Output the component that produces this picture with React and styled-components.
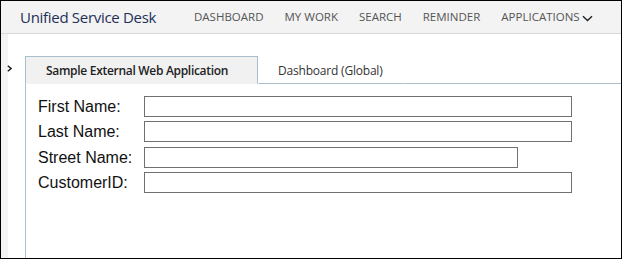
import React from 'react';
import styled, { createGlobalStyle } from 'styled-components';

const GlobalStyle = createGlobalStyle`
  html, body {
    margin: 0;
    padding: 0;
    background: #ffffff;
  }
  * {
    box-sizing: border-box;
  }
`;

const navItems = ['Dashboard', 'My Work', 'Search', 'Reminder'];

const fields = [
  { label: 'First Name:', width: 428 },
  { label: 'Last Name:', width: 428 },
  { label: 'Street Name:', width: 374 },
  { label: 'CustomerID:', width: 428 },
];

function App() {
  return (
    <>
      <GlobalStyle />
      <Frame>
        <Header>
          <Title>Unified Service Desk</Title>
          <Nav>
            {navItems.map((item) => (
              <NavItem key={item}>{item}</NavItem>
            ))}
            <NavItem>
              Applications
              <Chevron width="11" height="7" viewBox="0 0 11 7">
                <path d="M1 1.2 L5.5 5.6 L10 1.2" fill="none" stroke="#222" strokeWidth="1.4" />
              </Chevron>
            </NavItem>
          </Nav>
        </Header>

        <Body>
          <Rail>
            <RailToggle>
              <svg width="5" height="7" viewBox="0 0 5 7">
                <path d="M0.8 0.8 L4 3.5 L0.8 6.2" fill="none" stroke="#222" strokeWidth="1.5" />
              </svg>
            </RailToggle>
          </Rail>

          <Workspace>
            <TabRow>
              <Tab $active>Sample External Web Application</Tab>
              <Tab>Dashboard (Global)</Tab>
              <TabFiller />
            </TabRow>
            <Panel>
              <Form>
                {fields.map((f) => (
                  <React.Fragment key={f.label}>
                    <Label>{f.label}</Label>
                    <Input type="text" $width={f.width} />
                  </React.Fragment>
                ))}
              </Form>
            </Panel>
          </Workspace>
        </Body>
      </Frame>
    </>
  );
}

// Styled Components
const Frame = styled.div`
  width: 622px;
  height: 259px;
  border: 1px solid #000;
  display: flex;
  flex-direction: column;
  overflow: hidden;
  background: #fff;
`;

const Header = styled.header`
  height: 33px;
  flex: none;
  display: flex;
  align-items: center;
  padding-left: 19px;
  background: #f3f3f3;
  border-bottom: 1px solid #d8d8d8;
`;

const Title = styled.div`
  font-family: "Open Sans", "Noto Sans", sans-serif;
  font-size: 15px;
  color: #1f3058;
  letter-spacing: -0.3px;
  width: 174px;
  margin-top: -1px;
  white-space: nowrap;
`;

const Nav = styled.nav`
  display: flex;
  align-items: center;
  gap: 21px;
`;

const NavItem = styled.div`
  font-family: "Open Sans", "Noto Sans", sans-serif;
  font-size: 11.5px;
  color: #555;
  text-transform: uppercase;
  letter-spacing: 0;
  display: flex;
  align-items: center;
  margin-top: -1px;
  white-space: nowrap;
`;

const Chevron = styled.svg`
  margin-left: 2px;
  margin-top: 3px;
`;

const Body = styled.div`
  flex: 1;
  display: flex;
  min-height: 0;
`;

const Rail = styled.aside`
  width: 24px;
  flex: none;
  position: relative;
  background: linear-gradient(to right, #f4f4f4 0, #f4f4f4 7px, #fff 7px);
`;

const RailToggle = styled.div`
  position: absolute;
  left: 6px;
  top: 31px;
  line-height: 0;
`;

const Workspace = styled.main`
  flex: 1;
  display: flex;
  flex-direction: column;
  padding-top: 22px;
  background: #fff;
`;

const TabRow = styled.div`
  display: flex;
  height: 28px;
  flex: none;
`;

const Tab = styled.div`
  display: flex;
  align-items: center;
  flex: none;
  white-space: nowrap;
  padding: 1px 20px 0 ${(p) => (p.$active ? '20px' : '19px')};
  width: ${(p) => (p.$active ? '233px' : 'auto')};
  font-family: "Open Sans", "Noto Sans", sans-serif;
  font-size: 12px;
  font-weight: ${(p) => (p.$active ? 600 : 400)};
  letter-spacing: ${(p) => (p.$active ? '-0.3px' : '-0.2px')};
  color: ${(p) => (p.$active ? '#222' : '#333')};
  background: ${(p) => (p.$active ? '#f1f1f1' : '#fff')};
  border: 1px solid ${(p) => (p.$active ? '#a9c0cc' : 'transparent')};
  border-bottom: 1px solid ${(p) => (p.$active ? 'transparent' : '#a9c0cc')};
`;

const TabFiller = styled.div`
  flex: 1;
  border-bottom: 1px solid #a9c0cc;
`;

const Panel = styled.section`
  flex: 1;
  border-left: 1px solid #a9c0cc;
  padding: 12px 0 0 12px;
`;

const Form = styled.div`
  display: grid;
  grid-template-columns: 106px auto;
  row-gap: 4.4px;
  justify-items: start;
  align-items: center;
`;

const Label = styled.label`
  font-family: "Liberation Sans", Arial, sans-serif;
  font-size: 16px;
  color: #111;
  line-height: 21px;
`;

const Input = styled.input`
  width: ${(p) => p.$width}px;
  height: 21px;
  margin: 0;
  padding: 0 3px;
  border: 1px solid #707070;
  border-radius: 0;
  background: #fff;
  font-family: "Liberation Sans", Arial, sans-serif;
  font-size: 14px;
  outline: none;
`;

export default App;
